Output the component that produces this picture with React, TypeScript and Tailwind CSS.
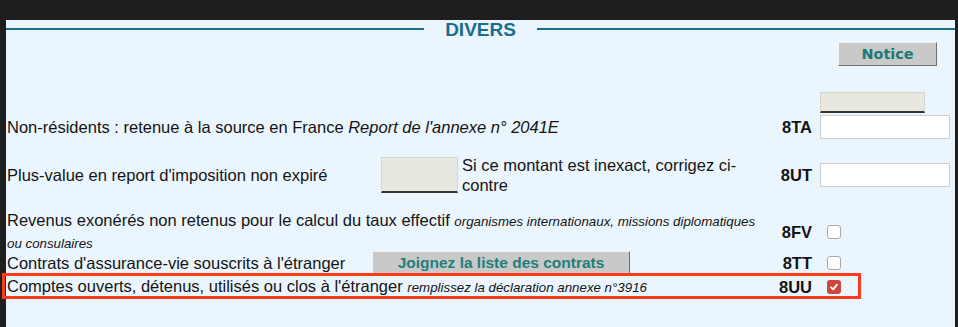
import React from "react";

function Box({ checked }: { checked?: boolean }) {
  if (checked) {
    return (
      <div className="ml-[7px] flex h-[14px] w-[14px] items-center justify-center rounded-[3px] bg-[#d0453b]">
        <svg width="10" height="10" viewBox="0 0 10 10" fill="none">
          <path d="M2 5.3 L4.2 7.4 L8 2.6" stroke="#ffffff" strokeWidth="1.8" strokeLinecap="round" strokeLinejoin="round" />
        </svg>
      </div>
    );
  }
  return <div className="ml-[7px] h-[14px] w-[14px] rounded-[3px] border border-[#a9a9a9] bg-white" />;
}

function Code({ children }: { children: React.ReactNode }) {
  return <div className="w-[42px] shrink-0 text-right font-bold">{children}</div>;
}

export default function App() {
  return (
    <div className="h-[327px] w-[958px] overflow-hidden bg-[#1e1e1e] pl-[6px] pr-[3px] pt-[6px]">
      <div className="relative h-full bg-[#ebf5fe] font-['Liberation_Sans',Arial,sans-serif] text-[16.5px] leading-[20px] text-[#141414]">
        {/* header */}
        <div className="mt-[14px] flex h-[18px] items-center">
          <div className="h-[2px] flex-1 bg-[#1a6d8c]" />
          <span className="px-[21px] text-[19px] font-bold leading-none text-[#1a6d8c]">DIVERS</span>
          <div className="h-[2px] flex-1 bg-[#1a6d8c]" />
        </div>

        {/* Notice */}
        <div className="mt-[4px] flex justify-end pr-[18px]">
          <button className="flex h-[24px] w-[99px] items-center justify-center border border-b-[#6f6f6f] border-l-[#f4f4f4] border-r-[#6f6f6f] border-t-[#f4f4f4] bg-[#c9c9c9] font-['DejaVu_Sans',sans-serif] text-[14.4px] font-bold leading-none text-[#1b7a78]">
            Notice
          </button>
        </div>

        {/* gray box above 8TA */}
        <div className="mt-[26px] flex pl-[1px] pr-[5px]">
          <div className="flex-1" />
          <div className="w-[42px]" />
          <div className="ml-[8px] w-[130px]">
            <div className="h-[21px] w-[105px] border border-b-2 border-b-[#333333] border-l-[#d6d6ce] border-r-[#d6d6ce] border-t-[#d6d6ce] bg-[#e8e8e0]" />
          </div>
        </div>

        {/* 8TA */}
        <div className="flex h-[28px] items-center pl-[1px] pr-[5px]">
          <div className="min-w-0 flex-1">
            Non-résidents : retenue à la source en France <i>Report de l'annexe n° 2041E</i>
          </div>
          <Code>8TA</Code>
          <div className="ml-[8px] w-[130px]">
            <div className="h-[24px] w-[130px] border border-[#cfcfcf] bg-white" />
          </div>
        </div>

        {/* 8UT */}
        <div className="mt-[14px] flex h-[40px] items-center pl-[1px] pr-[5px]">
          <div className="flex min-w-0 flex-1 items-center">
            <div className="w-[374px] shrink-0">Plus-value en report d'imposition non expiré</div>
            <div className="h-[36px] w-[77px] shrink-0 border border-b-2 border-b-[#333333] border-l-[#d6d6ce] border-r-[#d6d6ce] border-t-[#d6d6ce] bg-[#e8e8e0]" />
            <div className="ml-[4px]">
              Si ce montant est inexact, corrigez ci-
              <br />
              contre
            </div>
          </div>
          <Code>8UT</Code>
          <div className="ml-[8px] w-[130px]">
            <div className="h-[24px] w-[130px] border border-[#cfcfcf] bg-white" />
          </div>
        </div>

        {/* 8FV */}
        <div className="mt-[17px] flex h-[40px] items-center pl-[1px] pr-[5px]">
          <div className="min-w-0 flex-1">
            Revenus exonérés non retenus pour le calcul du taux effectif{" "}
            <i className="text-[13.3px]">organismes internationaux, missions diplomatiques ou consulaires</i>
          </div>
          <Code>8FV</Code>
          <div className="ml-[8px] w-[130px]">
            <Box />
          </div>
        </div>

        {/* 8TT */}
        <div className="flex h-[22px] items-center pl-[1px] pr-[5px]">
          <div className="flex min-w-0 flex-1 items-center">
            <div className="w-[365px] shrink-0">Contrats d'assurance-vie souscrits à l'étranger</div>
            <button className="flex h-[24px] w-[258px] shrink-0 items-center justify-center border border-b-[#6f6f6f] border-l-[#f4f4f4] border-r-[#6f6f6f] border-t-[#f4f4f4] bg-[#c9c9c9] text-[15.5px] font-bold leading-none text-[#1f7f7a]">
              Joignez la liste des contrats
            </button>
          </div>
          <Code>8TT</Code>
          <div className="ml-[8px] w-[130px]">
            <Box />
          </div>
        </div>

        {/* 8UU */}
        <div className="relative flex h-[26px] items-center pl-[1px] pr-[5px]">
          <div className="min-w-0 flex-1">
            Comptes ouverts, détenus, utilisés ou clos à l'étranger{" "}
            <i className="text-[13.3px]">remplissez la déclaration annexe n°3916</i>
          </div>
          <Code>8UU</Code>
          <div className="ml-[8px] w-[130px]">
            <Box checked />
          </div>
          <div className="pointer-events-none absolute left-[-4px] top-[-1px] h-[26px] w-[859px] border-[3px] border-[#ff3a1c]" />
        </div>
      </div>
    </div>
  );
}
